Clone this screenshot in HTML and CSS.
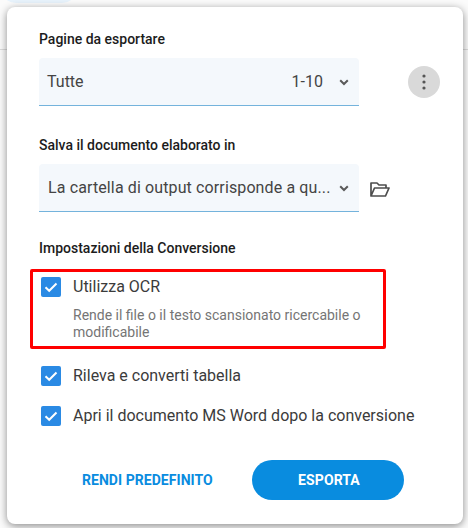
FILE: index.html
```html
<!DOCTYPE html>
<html lang="it">
<head>
<meta charset="utf-8">
<title>Esporta</title>
<link rel="stylesheet" href="styles.css">
</head>
<body>
<div class="backdrop">
  <div class="pill"></div>
  <div class="rule"></div>
</div>
<main class="dialog">
  <h2 class="heading">Pagine da esportare</h2>
  <div class="row">
    <div class="select">
      <span class="value">Tutte</span>
      <span class="range">1-10</span>
      <svg class="chev" width="12" height="8" viewBox="0 0 12 8"><path d="M2.2 2.2L6 6l3.8-3.8" fill="none" stroke="#5a5a5a" stroke-width="2"/></svg>
    </div>
    <button class="more" aria-label="Altro">
      <svg width="4" height="16" viewBox="0 0 4 16"><circle cx="2" cy="2" r="1.6" fill="#555"/><circle cx="2" cy="8" r="1.6" fill="#555"/><circle cx="2" cy="14" r="1.6" fill="#555"/></svg>
    </button>
  </div>
  <h2 class="heading second">Salva il documento elaborato in</h2>
  <div class="row">
    <div class="select">
      <span class="value path">La cartella di output corrisponde a qu...</span>
      <svg class="chev" width="12" height="8" viewBox="0 0 12 8"><path d="M2.2 2.2L6 6l3.8-3.8" fill="none" stroke="#5a5a5a" stroke-width="2"/></svg>
    </div>
    <svg class="folder" width="20" height="15" viewBox="0 0 20 15"><path d="M1 14V1h6l2 2h7v3M1 14h14.5L19 6H4.5L1 14z" fill="none" stroke="#4d4d4d" stroke-width="1.7" stroke-linejoin="round"/></svg>
  </div>
  <h2 class="heading third">Impostazioni della Conversione</h2>
  <section class="highlight">
    <label class="check">
      <svg class="box" width="20" height="20" viewBox="0 0 20 20"><rect width="20" height="20" rx="2" fill="#2a8ae4"/><path d="M4.5 10.2l3.7 3.6 7.3-7.3" fill="none" stroke="#fff" stroke-width="2"/></svg>
      <span class="label">Utilizza OCR</span>
    </label>
    <p class="hint">Rende il file o il testo scansionato ricercabile o modificabile</p>
  </section>
  <label class="check plain first">
    <svg class="box" width="20" height="20" viewBox="0 0 20 20"><rect width="20" height="20" rx="2" fill="#2a8ae4"/><path d="M4.5 10.2l3.7 3.6 7.3-7.3" fill="none" stroke="#fff" stroke-width="2"/></svg>
    <span class="label">Rileva e converti tabella</span>
  </label>
  <label class="check plain next">
    <svg class="box" width="20" height="20" viewBox="0 0 20 20"><rect width="20" height="20" rx="2" fill="#2a8ae4"/><path d="M4.5 10.2l3.7 3.6 7.3-7.3" fill="none" stroke="#fff" stroke-width="2"/></svg>
    <span class="label">Apri il documento MS Word dopo la conversione</span>
  </label>
  <div class="actions">
    <button class="link">RENDI PREDEFINITO</button>
    <button class="primary">ESPORTA</button>
  </div>
</main>
</body>
</html>
```
FILE: styles.css
```css
* { box-sizing: border-box; }
html, body { margin: 0; height: 100%; }
body {
  width: 468px;
  height: 528px;
  overflow: hidden;
  background: #fbfbfb;
  font-family: Roboto, "Liberation Sans", sans-serif;
  padding: 7px 5px 4px 7px;
}
.backdrop { position: absolute; inset: 0; z-index: 0; }
.pill {
  position: absolute; left: 0; top: -20px; width: 78px; height: 23px;
  background: #e8f3fc; border-radius: 0 0 16px 16px;
}
.rule { position: absolute; left: 0; right: 0; top: 49px; height: 1px; background: #dcdcdc; }
.dialog {
  position: relative;
  z-index: 1;
  width: 456px;
  height: 517px;
  background: #fff;
  border-radius: 8px;
  box-shadow: 0 2px 8px rgba(0,0,0,.45);
  padding: 24px 0 0 32px;
}
.heading {
  margin: 0;
  font-size: 14px;
  line-height: 16px;
  font-weight: 500;
  color: #1c1c1c;
}
.second { margin-top: 31px; }
.third { margin-top: 28px; }
.row { display: flex; align-items: center; margin-top: 11px; }
.select {
  width: 320px;
  height: 48px;
  display: flex;
  align-items: center;
  background: #f4f8fc;
  border-bottom: 1px solid #74b3dc;
  border-radius: 4px 4px 0 0;
  padding: 0 9px 0 8px;
  color: #444;
  font-size: 16px;
}
.value { flex: 1; white-space: nowrap; }
.path { padding-left: 1px; letter-spacing: .12px; }
.range { margin-right: 15px; }
.chev { display: block; }
.more {
  width: 32px; height: 32px; margin-left: 49px;
  border: 0; border-radius: 50%; background: #d9d9d9; padding: 0;
  display: flex; align-items: center; justify-content: center;
}
.folder { margin-left: 11px; margin-top: 2px; }
.highlight {
  margin: 13px 0 0 -9px;
  width: 356px;
  height: 80px;
  border: 3px solid #f00;
  border-radius: 2px;
  padding: 5px 0 0 8px;
}
.check { display: flex; align-items: center; gap: 12px; }
.box { flex: none; display: block; }
.label { font-size: 16px; line-height: 20px; color: #3b3b3b; white-space: nowrap; }
.hint {
  margin: 10px 0 0 32px;
  font-size: 14px;
  line-height: 17px;
  color: #757575;
  width: 300px;
}
.plain { margin-left: 2px; }
.first { margin-top: 17px; }
.next { margin-top: 20px; }
.actions { display: flex; align-items: center; margin-top: 34px; padding-left: 43px; }
button { font-family: inherit; }
.link {
  border: 0; background: none; padding: 0;
  color: #098cdf; font-size: 14px; font-weight: 700; letter-spacing: .05px;
  width: 131px; text-align: left; white-space: nowrap;
}
.primary {
  margin-left: 39px;
  width: 152px; height: 40px;
  border: 0; border-radius: 20px;
  background: #098cdf; color: #fff;
  font-size: 14px; font-weight: 700; letter-spacing: .1px;
  padding: 0 0 0 2px;
}
```
